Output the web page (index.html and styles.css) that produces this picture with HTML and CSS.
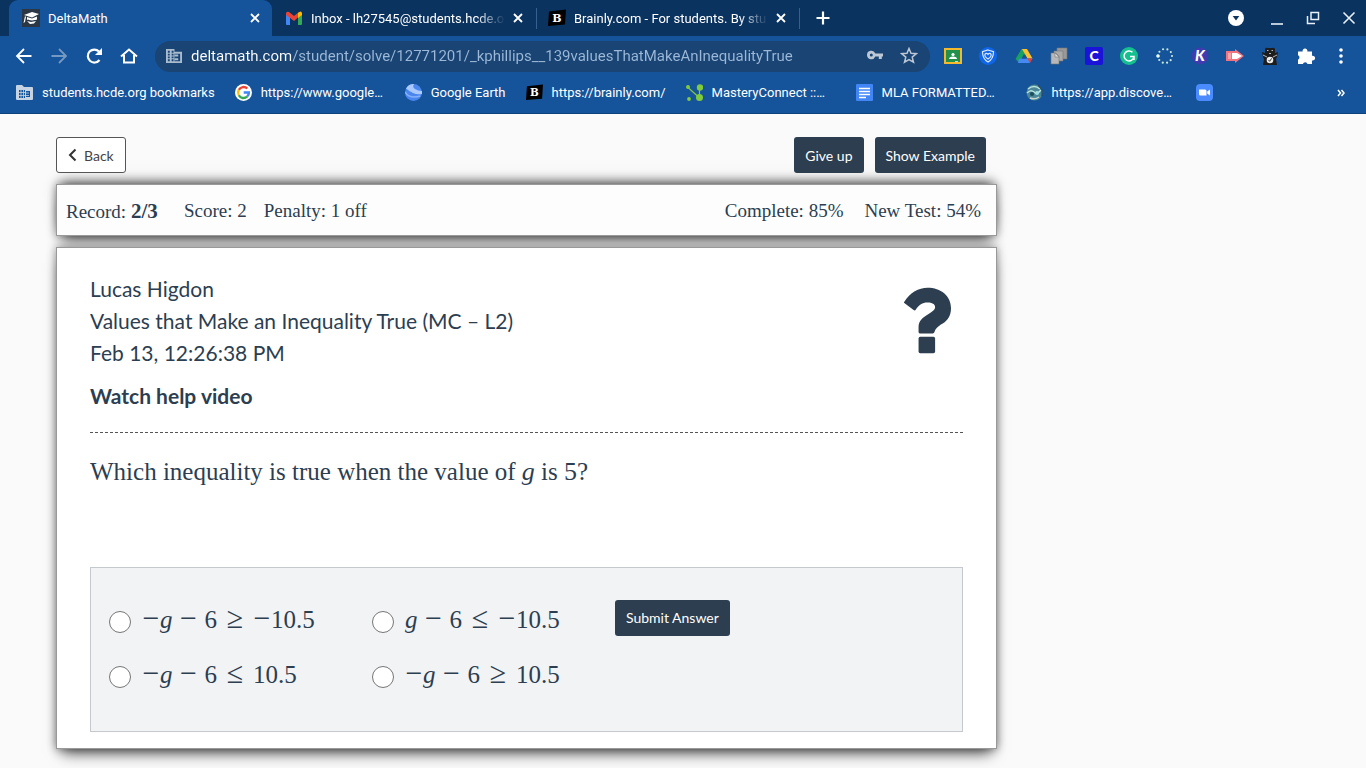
FILE: index.html
```html
<!DOCTYPE html>
<html lang="en">
<head>
  <meta charset="UTF-8">
  <meta name="viewport" content="width=device-width, initial-scale=1.0">
  <title>DeltaMath</title>
  <link rel="stylesheet" href="styles.css">
</head>
<body>
  <header class="browser">
    <div class="tabs">
      <div class="tab active">
        <svg class="fav" viewBox="0 0 18 18"><path fill="#2b3745" d="M0 0h18v18H0z"/><path fill="#fff" d="M2 6l8-3 7 2-7 3.500zM5 8l5 1.500 5-2v3c-2 .8-3 .5-5 1-2-.5-4-.3-5-1zM3 7l1 1-1 5-1.500 1zM5 12l4 1 5-1-2 2.500-4 .5z"/></svg>
        <span class="tab-title">DeltaMath</span>
        <button class="close" aria-label="Close tab"><svg viewBox="0 0 10 10"><path d="M1 1l8 8M9 1L1 9" stroke="#fff" stroke-width="1.800"/></svg></button>
      </div>
      <div class="tab">
        <svg class="fav" viewBox="0 0 18 18"><path fill="#4285f4" d="M1 4l4 3v9H2q-1 0-1-1z"/><path fill="#34a853" d="M13 7l4-3v11q0 1-1 1h-3z"/><path fill="#ea4335" d="M1 4q1-2 3-1l5 4 5-4v4.500L9 12 1 6z"/><path fill="#fbbc04" d="M13 4q3-3 4 0v2l-4 3z"/></svg>
        <span class="tab-title faded">Inbox - lh27545@students.hcde.o</span>
        <button class="close" aria-label="Close tab"><svg viewBox="0 0 10 10"><path d="M1 1l8 8M9 1L1 9" stroke="#fff" stroke-width="1.800"/></svg></button>
      </div>
      <div class="tab">
        <svg class="fav" viewBox="0 0 18 18"><path d="M1 2.500L18 0.500 17 15.500 0 17z" fill="#000"/><text x="9" y="13" text-anchor="middle" font-family="DejaVu Serif" font-weight="bold" font-size="11" fill="#fff">B</text></svg>
        <span class="tab-title faded">Brainly.com - For students. By stu</span>
        <button class="close" aria-label="Close tab"><svg viewBox="0 0 10 10"><path d="M1 1l8 8M9 1L1 9" stroke="#fff" stroke-width="1.800"/></svg></button>
      </div>
      <button class="new-tab" aria-label="New tab"><svg viewBox="0 0 14 14"><path d="M7 0.500v13M0.500 7h13" stroke="#fff" stroke-width="2.200"/></svg></button>
      <div class="window-buttons">
        <button class="search-tabs" aria-label="Search tabs"><svg viewBox="0 0 16 16"><circle cx="8" cy="8" r="8" fill="#fff"/><path d="M4.700 6h6.600L8 10.500z" fill="#0b335f"/></svg></button>
        <button aria-label="Minimize"><svg viewBox="0 0 16 16"><path d="M2 14h12" stroke="#e8f0fa" stroke-width="1.600"/></svg></button>
        <button aria-label="Restore"><svg viewBox="0 0 16 16" fill="none" stroke="#e8f0fa" stroke-width="1.500"><path d="M6 2.500h7.500v7H6zM2.500 6v7.500H10"/></svg></button>
        <button aria-label="Close"><svg viewBox="0 0 16 16"><path d="M2.500 2.500l11 11M13.500 2.500l-11 11" stroke="#e8f0fa" stroke-width="1.600"/></svg></button>
      </div>
    </div>

    <div class="toolbar">
      <nav class="nav">
        <button aria-label="Back"><svg viewBox="0 0 18 18" fill="none" stroke="#fff" stroke-width="1.800"><path d="M16.500 9H2.500M9 2L2 9l7 7"/></svg></button>
        <button aria-label="Forward"><svg viewBox="0 0 18 18" fill="none" stroke="#7499c3" stroke-width="1.800"><path d="M1.500 9h14M9 2l7 7-7 7"/></svg></button>
        <button aria-label="Reload"><svg viewBox="0 0 18 18"><path d="M14.500 13A6.500 6.500 0 1 1 14 4.500" fill="none" stroke="#fff" stroke-width="2.200"/><path d="M17 1v7h-7z" fill="#fff"/></svg></button>
        <button aria-label="Home"><svg viewBox="0 0 18 18" fill="none" stroke="#fff" stroke-width="2"><path d="M1 9.500L9 2.500l8 7M4 8v7.500h10V8"/></svg></button>
      </nav>
      <div class="omnibox">
        <svg class="site" viewBox="0 0 17 17"><path fill="#a9bbcf" d="M0 1h9v3h8v12H0z"/><path fill="#194473" d="M2 3h2v2H2zM6 3h2v2H6zM2 6h2v2H2zM6 6h2v2H6zM2 9h2v2H2zM6 9h2v2H6zM2 12h2v2H2zM6 12h2v2H6zM9 6h6v8H9z"/><path fill="#a9bbcf" d="M9 7h4v2H9zM9 11h4v2H9z"/></svg>
        <input class="url" type="text" aria-label="Address" value="deltamath.com/student/solve/12771201/_kphillips__139valuesThatMakeAnInequalityTrue">
        <button aria-label="Passwords"><svg viewBox="0 0 18 18"><path fill="#bcc8d5" fill-rule="evenodd" d="M1 8a4.300 4.300 0 0 1 8.300-1.500H17v3h-1.200V12h-3V9.500H9.300A4.300 4.300 0 0 1 1 8zm2.800 0a1.500 1.500 0 1 0 3 0 1.500 1.500 0 0 0-3 0z"/></svg></button>
        <button aria-label="Bookmark this page"><svg viewBox="0 0 18 18"><path d="M9 1.500l2 4.800 5.200.4-4 3.400 1.300 5.100L9 12.500l-4.500 2.700 1.300-5.100-4-3.400L7 6.300z" fill="none" stroke="#bcc8d5" stroke-width="1.500"/></svg></button>
      </div>
      <div class="extensions">
        <button aria-label="Classroom"><svg viewBox="0 0 18 18"><path fill="#f4b92c" d="M0 1h18v16H0z"/><path fill="#23904c" d="M2 3h14v12H2z"/><circle cx="9" cy="7.500" r="1.600" fill="#fff"/><path fill="#fff" d="M5 12q0-2.500 4-2.500t4 2.500z"/><path fill="#bfe0c8" d="M11 14h3v1h-3z"/></svg></button>
        <button aria-label="Shield"><svg viewBox="0 0 18 18"><circle cx="9" cy="9" r="9" fill="#0f66e8"/><path d="M9 3l5.500 1.800c0 5-1.500 8-5.500 10.200C5 12.800 3.500 9.800 3.500 4.800z" fill="none" stroke="#dce9ff" stroke-width="1.200"/><path d="M9 12C6 10 5.500 8.500 6 7.200c.8-1.200 2.300-1 3 .2.700-1.200 2.200-1.400 3-.2.500 1.300 0 2.800-3 4.800z" fill="none" stroke="#dce9ff" stroke-width="1.200"/></svg></button>
        <button aria-label="Drive"><svg viewBox="0 0 18 18"><path fill="#19a15f" d="M6.500 2H9l2 4-7 10-3.500-4z"/><path fill="#fbc02d" d="M7 2h5l5.500 9.500h-5z"/><path fill="#4688f4" d="M4 11.500h9L15 16H3z"/><path fill="#e94235" d="M12.500 11.500h5L15 16z"/><path fill="#15539a" d="M9 7l2.500 4.500h-5z"/></svg></button>
        <button aria-label="Copies"><svg viewBox="0 0 18 18" stroke="#777" stroke-width=".6"><path fill="#999" d="M7 1h10v11H7z"/><path fill="#aaa" d="M4 4h9v10H4z"/><path fill="#b8b8b8" d="M1 6h5l3 3v8H1z"/><path fill="#ddd" d="M5 6v4h4z"/></svg></button>
        <button aria-label="Clever"><svg viewBox="0 0 18 18"><rect width="18" height="18" rx="2" fill="#1914d8"/><text x="9" y="14" text-anchor="middle" font-family="Lato" font-weight="900" font-size="14" fill="#fff">C</text></svg></button>
        <button aria-label="Grammarly"><svg viewBox="0 0 18 18"><circle cx="9" cy="9" r="9" fill="#16bf8f"/><path d="M12.500 5.300A5 5 0 1 0 14 9.500H10M14 9.500v3.500" fill="none" stroke="#fff" stroke-width="1.500"/></svg></button>
        <button aria-label="Loading"><svg viewBox="0 0 18 18"><circle cx="9" cy="9" r="7" fill="none" stroke="#c5e8d8" stroke-width="2.200" stroke-linecap="round" stroke-dasharray="0 4.400"/><circle cx="2" cy="9" r="1.800" fill="#e8fff4"/></svg></button>
        <button aria-label="Kami"><svg viewBox="0 0 18 18"><circle cx="9" cy="9" r="8.500" fill="#3f3cb0"/><text x="9" y="14" text-anchor="middle" font-family="Lato" font-weight="900" font-style="italic" font-size="15" fill="#fff">K</text></svg></button>
        <button aria-label="Record"><svg viewBox="0 0 18 18"><path fill="#f3727f" d="M0 4h9V2l9 7-9 7v-2H0z"/><path fill="#fff" d="M6 6h5l5 3-5 3H6z"/><path fill="#f7a3aa" d="M2 6h3v6H2z"/></svg></button>
        <button aria-label="Bear"><svg viewBox="0 0 18 18"><path fill="#1d1d1d" d="M4 2q1-2 3-1h4q2-1 3 1v4l3-1-1 5-1 2 1 6H2l1-6-1-2-1-5 3 1z"/><path d="M6 3.500h1.500M10.500 3.500H12M2 8l4 2M16 8l-4 2M8 6.500h2" stroke="#b7b7b7" stroke-width="1"/><circle cx="9" cy="13" r="3.300" fill="#eee"/><path d="M7.500 13l1.200 1.300 2-3" fill="none" stroke="#333"/></svg></button>
        <button aria-label="Extensions"><svg viewBox="0 0 18 18"><path fill="#fff" d="M1 4.500h4.700a2.400 2.400 0 1 1 4.600 0H15v4.300a2.400 2.400 0 1 1 0 4.600V17h-4.500a2.400 2.400 0 0 0-4.600 0H1v-4.300a2.400 2.400 0 0 0 0-4.400z"/></svg></button>
        <button aria-label="Menu"><svg viewBox="0 0 18 18" fill="#fff"><circle cx="9" cy="3" r="1.800"/><circle cx="9" cy="9" r="1.800"/><circle cx="9" cy="15" r="1.800"/></svg></button>
      </div>
    </div>

    <div class="bookmarks">
      <a href="#"><svg viewBox="0 0 17 17"><path fill="#c5d3e2" d="M0 2q0-1 1-1h5l2 2h8q1 0 1 1v11q0 1-1 1H1q-1 0-1-1z"/><path fill="#15539a" d="M3 6h6v8H3zM10 7h4v6h-4z"/><path d="M5 6v8M7.500 6v8M3 8.500h6M3 11.500h6M10 9h3M10 11.500h3" stroke="#c5d3e2" stroke-width=".8"/></svg><span>students.hcde.org bookmarks</span></a>
      <a href="#"><svg viewBox="0 0 17 17"><circle cx="8.500" cy="8.500" r="8.500" fill="#fff"/><g fill="none" stroke-width="2.400"><path d="M12.300 4.500A5.400 5.400 0 0 0 3.800 5.900" stroke="#ea4335"/><path d="M3.800 5.900a5.400 5.400 0 0 0 0 5.300" stroke="#fbbc05"/><path d="M3.800 11.200a5.400 5.400 0 0 0 8.300 1.500" stroke="#34a853"/><path d="M12.100 12.700a5.400 5.400 0 0 0 1.800-4.200H8.700" stroke="#4285f4"/></g></svg><span class="cut">https://www.google…</span></a>
      <a href="#"><svg viewBox="0 0 17 17"><circle cx="8.500" cy="8.500" r="8.500" fill="#4a86ee"/><path fill="#a9c9ff" d="M1 4.500A8.500 8.500 0 0 1 9 0q-2 3 1 5t7 2v3q-5 1-9-1T1 4.500z"/><path d="M0 8q3 5 8 5t7-1" fill="none" stroke="#83b0fa" stroke-width="1.500"/></svg><span>Google Earth</span></a>
      <a href="#"><svg viewBox="0 0 18 18"><path d="M1 2.500L18 0.500 17 15.500 0 17z" fill="#000"/><text x="9" y="13" text-anchor="middle" font-family="DejaVu Serif" font-weight="bold" font-size="11" fill="#fff">B</text></svg><span>https://brainly.com/</span></a>
      <a href="#"><svg viewBox="0 0 17 17" fill="#7fcb3c"><path d="M2 3.500l10 9M13.500 13V4" stroke="#7fcb3c" stroke-width="1.200"/><circle cx="2" cy="3" r="2"/><circle cx="14" cy="3.500" r="3.200"/><circle cx="13.500" cy="13.500" r="3.500"/><circle cx="3" cy="15" r="1.900"/></svg><span class="cut">MasteryConnect ::…</span></a>
      <a href="#"><svg viewBox="0 0 17 17"><rect width="17" height="17" rx="1" fill="#4285f4"/><path d="M3 4.500h11M3 7.500h11M3 10.500h11M3 13.500h7" stroke="#fff" stroke-width="1.700"/></svg><span class="cut">MLA FORMATTED…</span></a>
      <a href="#"><svg viewBox="0 0 17 17"><circle cx="8.500" cy="8.500" r="8" fill="#4b8796"/><path d="M2 5q6-5 12 0M1 9q4-4 7-1t7-2" fill="none" stroke="#b7e3dd" stroke-width="1.500"/><circle cx="6" cy="10" r="2" fill="#1d4c5b"/><circle cx="11" cy="9" r="2" fill="#9fe0e4"/><path d="M4 14q5 2 9-1" fill="none" stroke="#c5d8d0" stroke-width="1.500"/><path d="M12 1l4 5v6" fill="none" stroke="#28475d" stroke-width="1.200"/></svg><span class="cut">https://app.discove…</span></a>
      <a href="#" aria-label="Zoom"><svg viewBox="0 0 17 17"><rect width="17" height="17" rx="4" fill="#4a8cff"/><path fill="#fff" d="M3 5.500h6q1.500 0 1.500 1.500v4.500H4.500Q3 11.500 3 10zM11.200 7.500L14 5.500v6l-2.800-2z"/></svg></a>
      <button class="more" aria-label="More bookmarks"><svg viewBox="0 0 8 8"><path d="M1 1l2.500 3L1 7M4.500 1L7 4 4.500 7" fill="none" stroke="#fff" stroke-width="1.500"/></svg></button>
    </div>
  </header>

  <main class="page">
    <div class="actions">
      <button class="btn btn-back"><svg viewBox="0 0 9 14"><path d="M7.500 1.500L2 7l5.500 5.500" fill="none" stroke="#333" stroke-width="2"/></svg>Back</button>
      <button class="btn btn-dark push">Give up</button>
      <button class="btn btn-dark">Show Example</button>
    </div>

    <section class="panel record">
      <span class="tally">Record: <strong>2/3</strong></span>
      <span>Score: 2</span>
      <span>Penalty: 1 off</span>
      <span class="push">Complete: 85%</span>
      <span class="test">New Test: 54%</span>
    </section>

    <section class="panel problem">
      <div class="heading">
        <div class="info">
          <div>Lucas Higdon</div>
          <div>Values that Make an Inequality True (MC – L2)</div>
          <div>Feb 13, 12:26:38 PM</div>
          <a class="video" href="#">Watch help video</a>
        </div>
        <svg class="help" viewBox="608 502 148 202" role="img" aria-label="Help"><path d="M611 548C630 518 655 504 682 504 722 504 753 528 753 566 753 590 742 604 728 612 712 621 706 628 703 638Q702 642 698 642H659Q655 642 655 638V622C655 604 668 594 684 584 698 576 705 570 705 563 705 554 696 549 682 549 666 549 657 556 646 571Q643 574 640 571L613 551Q610 550 611 548z"/><rect x="655" y="652" width="50" height="50" rx="5"/></svg>
      </div>

      <p class="question">Which inequality is true when the value of <i class="math">g</i> is <span class="math">5</span>?</p>

      <form class="answers">
        <label><input type="radio" name="answer"><span class="math"><b class="neg">−</b><i>g</i><b class="op">−</b>6<b class="rel">≥</b><b class="neg">−</b>10.5</span></label>
        <label><input type="radio" name="answer"><span class="math"><i>g</i><b class="op">−</b>6<b class="rel">≤</b><b class="neg">−</b>10.5</span></label>
        <button class="btn btn-dark" type="button">Submit Answer</button>
        <label><input type="radio" name="answer"><span class="math"><b class="neg">−</b><i>g</i><b class="op">−</b>6<b class="rel">≤</b>10.5</span></label>
        <label><input type="radio" name="answer"><span class="math"><b class="neg">−</b><i>g</i><b class="op">−</b>6<b class="rel">≥</b>10.5</span></label>
      </form>
    </section>
  </main>
</body>
</html>
```
FILE: styles.css
```css
* {
  box-sizing: border-box;
}
body {
  margin: 0;
  background: #fafafa;
  color: #2c3e50;
  font-family: Georgia, "Liberation Serif", serif;
}
button {
  font: inherit;
  color: inherit;
  background: none;
  border: 0;
  padding: 0;
  cursor: pointer;
}
svg {
  display: block;
  flex: none;
}
.push {
  margin-left: auto;
}

/* browser */
.browser {
  background: #15539a;
  border-bottom: 1px solid #0f427d;
  color: #fff;
  font-family: Roboto, sans-serif;
  font-size: 13px;
}
.tabs {
  display: flex;
  align-items: center;
  height: 36px;
  padding: 0 9px;
  background: #0b335f;
}
.tab {
  position: relative;
  display: flex;
  align-items: center;
  gap: 8px;
  width: 263px;
  height: 36px;
  padding: 0 12px 0 13px;
}
.tab.active {
  background: #15539a;
  border-radius: 9px 9px 0 0;
}
.tab:not(.active)::after {
  content: "";
  position: absolute;
  right: -2px;
  top: 8px;
  width: 1px;
  height: 21px;
  background: #35608f;
}
.fav {
  width: 18px;
  height: 18px;
}
.tab-title {
  flex: 1;
  white-space: nowrap;
}
.faded {
  mask-image: linear-gradient(to right, #000 85%, transparent);
}
.close svg {
  width: 10px;
  height: 10px;
}
.new-tab {
  margin-left: 18px;
}
.new-tab svg {
  width: 14px;
  height: 14px;
}
.window-buttons {
  display: flex;
  gap: 20px;
  margin-left: auto;
}
.window-buttons svg {
  width: 16px;
  height: 16px;
}
.search-tabs {
  margin-right: 5px;
}
.toolbar {
  display: flex;
  align-items: center;
  height: 40px;
  padding: 0 16px 0 15px;
}
.toolbar button svg {
  width: 18px;
  height: 18px;
}
.nav {
  display: flex;
  gap: 17px;
}
.omnibox {
  flex: 1;
  display: flex;
  align-items: center;
  gap: 16px;
  height: 31px;
  margin: 0 14px 0 17px;
  padding: 0 12px 0 11px;
  border-radius: 16px;
  background: #194473;
}
.site {
  width: 16px;
  height: 16px;
  margin-right: -7px;
}
.url {
  flex: 1;
  min-width: 0;
  padding: 0;
  border: 0;
  outline: 0;
  font-family: Roboto, sans-serif;
  font-size: 15px;
  color: transparent;
  background: linear-gradient(to right, #fff 100px, #9db9d9 100px);
  background-clip: text;
}
.extensions {
  display: flex;
  justify-content: space-between;
  flex: none;
  width: 406px;
}
.bookmarks {
  display: flex;
  align-items: center;
  gap: 20px;
  height: 37px;
  padding: 0 21px 4px 16px;
}
.bookmarks a {
  display: flex;
  align-items: center;
  gap: 9px;
  color: #fff;
  text-decoration: none;
  white-space: nowrap;
}
.bookmarks svg {
  width: 17px;
  height: 17px;
}
.cut {
  width: 124px;
}
.more {
  margin-left: auto;
}
.bookmarks .more svg {
  width: 8px;
  height: 8px;
}

/* page */
.page {
  max-width: 1053px;
  padding: 23px 56px 20px;
}
.actions {
  display: flex;
  gap: 11px;
  padding-right: 11px;
}
.btn {
  display: flex;
  align-items: center;
  height: 36px;
  padding: 0 11px;
  border-radius: 3px;
  font-family: Lato, sans-serif;
  font-size: 14px;
}
.btn-back {
  gap: 7px;
  border: 1px solid #555;
  background: #fff;
  color: #444;
}
.btn-back svg {
  width: 9px;
  height: 14px;
}
.btn-dark {
  background: #2c3e50;
  color: #fff;
}
.panel {
  margin-top: 11px;
  border: 1px solid #999;
  background: #fff;
  box-shadow: 0 10px 14px -6px rgba(0, 0, 0, 0.65), 0 0 9px rgba(0, 0, 0, 0.45);
}
.record {
  display: flex;
  align-items: center;
  gap: 17px;
  height: 52px;
  padding: 2px 15px 0 9px;
  background: #fdfdfd;
  font-size: 19px;
  box-shadow: 0 10px 14px -6px rgba(0, 0, 0, 0.65), 0 -7px 12px -5px rgba(0, 0, 0, 0.6), 0 0 9px rgba(0, 0, 0, 0.35);
}
.tally {
  min-width: 101px;
}
.tally strong {
  font-size: 21px;
}
.test {
  margin-left: 4px;
}
.problem {
  position: relative;
  padding: 25px 33px 16px;
}
.heading {
  display: flex;
  justify-content: space-between;
  padding-bottom: 20px;
  border-bottom: 1px dashed #555;
}
.info {
  font-family: Lato, sans-serif;
  font-size: 21px;
  line-height: 32px;
}
.video {
  display: block;
  margin-top: 11px;
  color: #2c3e50;
  font-weight: 700;
  text-decoration: none;
}
.help {
  width: 49px;
  height: 67px;
  margin: 14px 11px 0 0;
  fill: #2c3e50;
}
.question {
  margin: 22px 0 78px;
  font-size: 25px;
  line-height: 34px;
}
.answers {
  display: grid;
  grid-template-columns: 263px 243px auto;
  grid-auto-rows: 55px;
  justify-content: start;
  align-items: center;
  padding: 22px 18px 31px;
  border: 1px solid #c5c8cc;
  background: #f2f3f5;
}
.answers .btn {
  justify-self: start;
}
.answers label {
  display: flex;
  align-items: center;
  gap: 11px;
  padding-top: 8px;
}
.answers input {
  appearance: none;
  width: 22px;
  height: 22px;
  margin: 0;
  border: 1px solid #767676;
  border-radius: 50%;
  background: #fff;
}
.math {
  font-family: "Liberation Serif", serif;
  font-size: 26px;
  line-height: 30px;
}
.answers .math {
  margin-top: -6px;
  font-size: 25px;
}
.math b {
  display: inline-block;
  font-size: 30px;
  font-weight: 400;
  text-align: center;
}
.neg {
  width: 18px;
}
.op {
  width: 32px;
}
.rel {
  width: 36px;
}
```
